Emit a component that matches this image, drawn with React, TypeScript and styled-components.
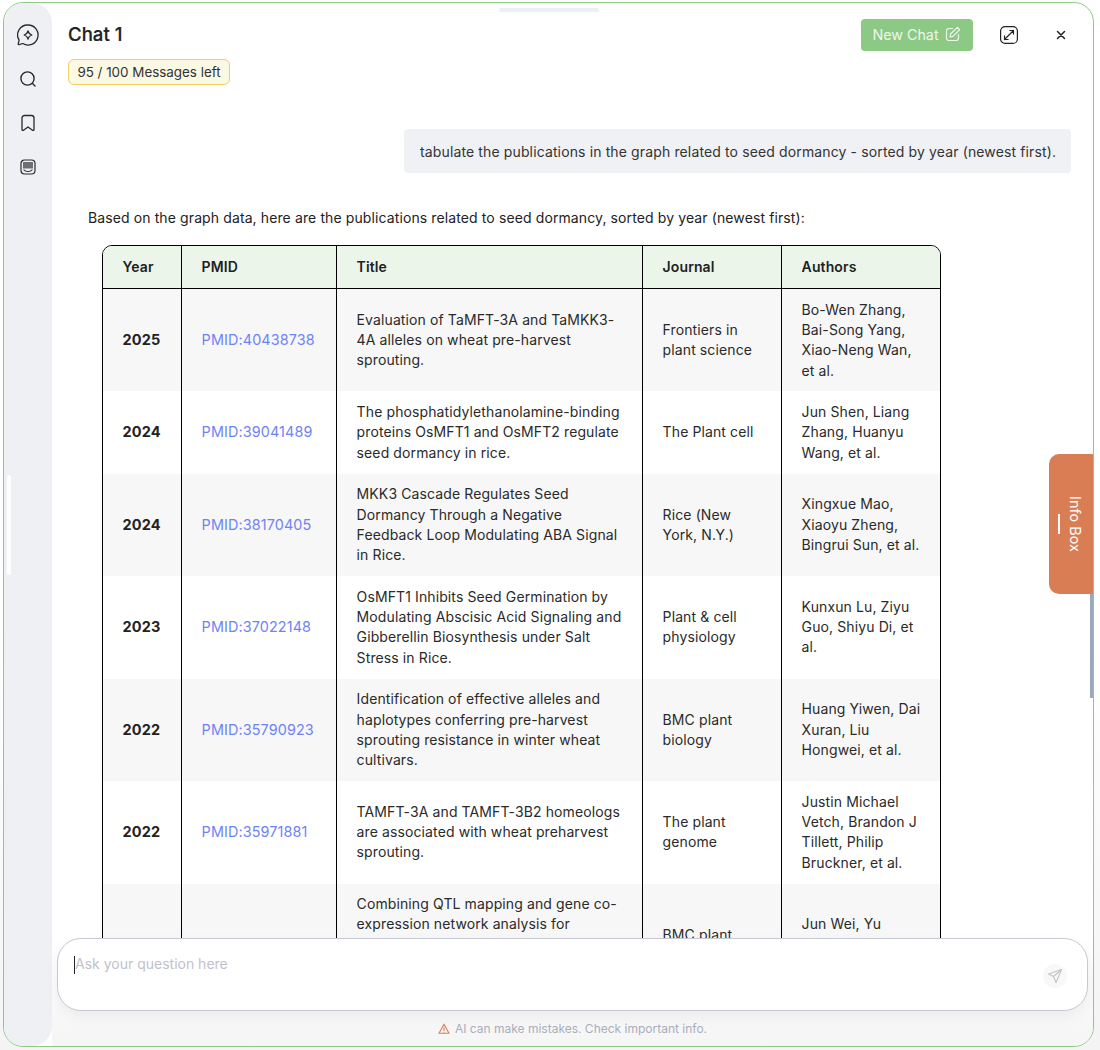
import React from "react";
import styled, { createGlobalStyle } from "styled-components";

const Global = createGlobalStyle`
  html, body { margin: 0; padding: 0; background: #fafafa; }
  body { font-family: Inter, "Liberation Sans", sans-serif; color: #222; }
  #root { height: 1050px; overflow: hidden; }
`;
const Page = styled.div`
  padding: 2px 6px 3px 3px;
  height: 1050px;
  box-sizing: border-box;
  background: linear-gradient(to bottom, #fff 0, #fff 60%, #f4f4f4 100%);
`;
const Card = styled.div`
  position: relative;
  height: 100%;
  box-sizing: border-box;
  border: 1px solid #8ccb84;
  border-radius: 20px;
  background: #fff;
  display: flex;
  overflow: hidden;
`;
const Sidebar = styled.nav`
  width: 48px;
  flex: none;
  background: #eef0f4;
  border-radius: 0 20px 20px 0;
  display: flex;
  flex-direction: column;
  align-items: center;
  padding-top: 21px;
  gap: 22px;
  box-sizing: border-box;
`;
const SideIcon = styled.span`
  display: flex;
  height: 22px;
  align-items: center;
  justify-content: center;
  color: #2a2a2a;
`;
const DrawerGrip = styled.div`
  position: absolute;
  left: 3px;
  top: 472px;
  width: 4px;
  height: 100px;
  border-radius: 2px;
  background: #fff;
`;
const TopGrip = styled.div`
  position: absolute;
  left: 495px;
  top: 5px;
  width: 100px;
  height: 4px;
  border-radius: 2px;
  background: #eeeff3;
`;
const Main = styled.main`
  flex: 1;
  min-width: 0;
  display: flex;
  flex-direction: column;
`;
const Header = styled.header`
  flex: none;
  height: 85px;
  box-sizing: border-box;
  padding: 18px 22px 0 16px;
  display: flex;
  justify-content: space-between;
  align-items: flex-start;
`;
const TitleBlock = styled.div`
  display: flex;
  flex-direction: column;
  align-items: flex-start;
  gap: 12px;
`;
const ChatTitle = styled.h1`
  margin: 0;
  font-size: 18.6px;
  line-height: 26px;
  font-weight: 500;
  color: #222;
  -webkit-text-stroke: 0.2px #222;
`;
const Quota = styled.span`
  height: 26px;
  box-sizing: border-box;
  width: 162px;
  display: flex;
  align-items: center;
  justify-content: center;
  border: 1px solid #efd060;
  border-radius: 6px;
  background: #fbf8e3;
  font-size: 13.4px;
  color: #333;
  white-space: nowrap;
`;
const Actions = styled.div`
  display: flex;
  align-items: center;
  margin-top: -2px;
`;
const NewChat = styled.button`
  width: 112px;
  height: 32px;
  border: 0;
  border-radius: 4px;
  background: #8cc984;
  color: #eef7ec;
  font: 400 14.3px Inter, sans-serif;
  display: flex;
  align-items: center;
  justify-content: center;
  gap: 6px;
  padding: 0 1px 2px 0;
`;
const IconBtn = styled.span<{ $ml: number }>`
  display: flex;
  margin-left: ${(p) => p.$ml}px;
  color: #222;
`;
const Messages = styled.div`
  flex: 1;
  min-height: 0;
  overflow: hidden;
  padding: 41px 22px 0 36px;
  display: flex;
  flex-direction: column;
  align-items: flex-start;
`;
const UserBubble = styled.div`
  align-self: flex-end;
  height: 44px;
  box-sizing: border-box;
  width: 667px;
  padding-left: 16px;
  display: flex;
  align-items: center;
  border-radius: 4px;
  background: #f0f1f5;
  font-size: 14px;
  letter-spacing: 0.13px;
  color: #333;
  white-space: nowrap;
  flex: none;
`;
const Reply = styled.p`
  margin: 35px 0 0;
  font-size: 14px;
  letter-spacing: 0.11px;
  line-height: 20px;
  color: #222;
  white-space: nowrap;
  flex: none;
`;
const TableFrame = styled.table`
  margin: 17px 0 0 14px;
  width: 839px;
  table-layout: fixed;
  border-collapse: separate;
  border-spacing: 0;
  border: 1px solid #000;
  border-radius: 10px;
  flex: none;
  font-size: 14px;
  letter-spacing: 0.11px;
  line-height: 20.3px;
  color: #2a2a2a;
`;
const Th = styled.th`
  height: 43px;
  padding: 0 0 0 19.6px;
  box-sizing: border-box;
  background: #ebf5ea;
  text-align: left;
  font-weight: 600;
  font-size: 14px;
  color: #222;
  border-bottom: 1px solid #000;
  border-right: 1px solid #000;
  &:first-child { border-top-left-radius: 9px; }
  &:last-child { border-right: 0; border-top-right-radius: 9px; }
`;
const Row = styled.tr<{ $shade: boolean }>`
  background: ${(p) => (p.$shade ? "#f7f7f7" : "#fff")};
`;
const Td = styled.td`
  padding: 10.65px 0 10.65px 19.6px;
  border-right: 1px solid #000;
  white-space: nowrap;
  vertical-align: middle;
  &:last-child { border-right: 0; }
`;
const YearCell = styled(Td)`
  font-weight: 700;
  font-size: 14.5px;
  color: #222;
`;
const PmidLink = styled.a`
  color: #6f83f5;
  text-decoration: none;
  font-size: 14.4px;
`;
const Footer = styled.div`
  flex: none;
  background: linear-gradient(to bottom, #fff, #f5f5f5);
  display: flex;
  flex-direction: column;
  height: 108px;
`;
const InputBox = styled.div`
  height: 73px;
  box-sizing: border-box;
  margin: 0 5px;
  border: 1px solid #c6c9d3;
  border-radius: 24px;
  background: #fff;
  box-shadow: 0 6px 14px rgba(0, 0, 0, 0.05);
  padding: 17px 32px 0 16px;
  display: flex;
  justify-content: space-between;
`;
const Placeholder = styled.span`
  font-size: 14px;
  line-height: 16px;
  height: 18px;
  color: #bfc2cc;
  border-left: 1px solid #222;
`;
const Send = styled.span`
  width: 24px;
  height: 24px;
  margin-top: 8px;
  margin-right: -12px;
  border-radius: 50%;
  background: #f8f8f8;
  color: #c0c3cc;
  display: flex;
  align-items: center;
  justify-content: center;
`;
const Notice = styled.div`
  margin-top: 10px;
  display: flex;
  align-items: center;
  justify-content: center;
  gap: 5px;
  font-size: 12px;
  line-height: 16px;
  color: #a9adbd;
`;
const InfoTab = styled.div`
  position: absolute;
  right: 0;
  top: 451px;
  width: 44px;
  height: 140px;
  box-sizing: border-box;
  border-radius: 10px 0 0 10px;
  background: #d97d55;
  display: flex;
  align-items: center;
  justify-content: center;
  gap: 7px;
  color: #fff;
  font-size: 14.5px;
`;
const TabDash = styled.span`
  width: 2px;
  height: 20px;
  background: #fff;
`;
const TabLabel = styled.span`
  writing-mode: vertical-rl;
  white-space: nowrap;
`;
const ScrollThumb = styled.div`
  position: absolute;
  right: 0;
  top: 591px;
  width: 3px;
  height: 104px;
  background: #9aa8bf;
`;

type Pub = { y: string; p: string; t: string[]; j: string[]; a: string[] };
const pubs: Pub[] = [
  { y: "2025", p: "PMID:40438738", t: ["Evaluation of TaMFT-3A and TaMKK3-", "4A alleles on wheat pre-harvest", "sprouting."], j: ["Frontiers in", "plant science"], a: ["Bo-Wen Zhang,", "Bai-Song Yang,", "Xiao-Neng Wan,", "et al."] },
  { y: "2024", p: "PMID:39041489", t: ["The phosphatidylethanolamine-binding", "proteins OsMFT1 and OsMFT2 regulate", "seed dormancy in rice."], j: ["The Plant cell"], a: ["Jun Shen, Liang", "Zhang, Huanyu", "Wang, et al."] },
  { y: "2024", p: "PMID:38170405", t: ["MKK3 Cascade Regulates Seed", "Dormancy Through a Negative", "Feedback Loop Modulating ABA Signal", "in Rice."], j: ["Rice (New", "York, N.Y.)"], a: ["Xingxue Mao,", "Xiaoyu Zheng,", "Bingrui Sun, et al."] },
  { y: "2023", p: "PMID:37022148", t: ["OsMFT1 Inhibits Seed Germination by", "Modulating Abscisic Acid Signaling and", "Gibberellin Biosynthesis under Salt", "Stress in Rice."], j: ["Plant & cell", "physiology"], a: ["Kunxun Lu, Ziyu", "Guo, Shiyu Di, et", "al."] },
  { y: "2022", p: "PMID:35790923", t: ["Identification of effective alleles and", "haplotypes conferring pre-harvest", "sprouting resistance in winter wheat", "cultivars."], j: ["BMC plant", "biology"], a: ["Huang Yiwen, Dai", "Xuran, Liu", "Hongwei, et al."] },
  { y: "2022", p: "PMID:35971881", t: ["TAMFT-3A and TAMFT-3B2 homeologs", "are associated with wheat preharvest", "sprouting."], j: ["The plant", "genome"], a: ["Justin Michael", "Vetch, Brandon J", "Tillett, Philip", "Bruckner, et al."] },
  { y: "2022", p: "PMID:35501690", t: ["Combining QTL mapping and gene co-", "expression network analysis for", "candidate genes of seed dormancy", "in rice cultivars from", "different regions."], j: ["BMC plant", "biology"], a: ["Jun Wei, Yu", "Zhang, Xin", "Li, et al."] },
];

const Lines = ({ items }: { items: string[] }) => (
  <>
    {items.map((l, i) => (
      <React.Fragment key={i}>
        {i > 0 && <br />}
        {l}
      </React.Fragment>
    ))}
  </>
);

const stroke = { fill: "none", stroke: "currentColor", strokeWidth: 1.4, strokeLinecap: "round" as const, strokeLinejoin: "round" as const };

export default function App() {
  return (
    <Page>
      <Global />
      <Card>
        <Sidebar>
          <SideIcon>
            <svg width="22" height="22" viewBox="0 0 22 22" {...stroke} strokeWidth={1.3}>
              <path d="M11 1a10 10 0 1 1-5.2 18.5L2 20.6c-.6.1-.9-.3-.8-.8l.9-3.6A10 10 0 0 1 11 1z" />
              <path d="M11 7c.5 2.100 1.500 3.200 3.800 4-2.300.8-3.300 1.900-3.800 4-.5-2.100-1.500-3.200-3.800-4 2.300-.8 3.300-1.900 3.800-4z" />
            </svg>
          </SideIcon>
          <SideIcon>
            <svg width="18" height="18" viewBox="0 0 18 18" {...stroke}>
              <circle cx="8.500" cy="8.500" r="6.600" />
              <path d="M13.500 13.500l2.500 2.500" />
            </svg>
          </SideIcon>
          <SideIcon>
            <svg width="16" height="18" viewBox="0 0 16 18" {...stroke} strokeWidth={1.3}>
              <path d="M2 4a2.500 2.500 0 0 1 2.500-2.500h7A2.500 2.500 0 0 1 14 4v11.500c0 .9-.9 1.200-1.500.7L8 13l-4.500 3.200c-.6.500-1.500.2-1.500-.7z" />
            </svg>
          </SideIcon>
          <SideIcon>
            <svg width="16" height="16" viewBox="0 0 16 16" {...stroke} strokeWidth={1.2}>
              <rect x="1" y="1" width="14" height="14" rx="3.500" />
              <path d="M3 3h10v6.500H3z" fill="currentColor" stroke="none" opacity="0.65" />
              <path d="M4 11c1.500 2 6.500 2 8 0" />
            </svg>
          </SideIcon>
        </Sidebar>
        <Main>
          <Header>
            <TitleBlock>
              <ChatTitle>Chat 1</ChatTitle>
              <Quota>95 / 100 Messages left</Quota>
            </TitleBlock>
            <Actions>
              <NewChat>
                New Chat
                <svg width="16" height="16" viewBox="0 0 16 16" fill="none" stroke="currentColor" strokeWidth="1.200" strokeLinecap="round" strokeLinejoin="round">
                  <path d="M13.500 8.500v3.500a2.500 2.500 0 0 1-2.500 2.500H4A2.500 2.500 0 0 1 1.500 12V5A2.500 2.500 0 0 1 4 2.500h3.500" />
                  <path d="M12.300 1.300l2.400 2.400-6.700 6.700-3 .6.600-3z" />
                </svg>
              </NewChat>
              <IconBtn $ml={27}>
                <svg width="18" height="18" viewBox="0 0 18 18" fill="none" stroke="currentColor" strokeWidth="1.200" strokeLinecap="round" strokeLinejoin="round">
                  <rect x="0.600" y="0.600" width="16.800" height="16.800" rx="4.500" />
                  <path d="M4.500 13.500L13.500 4.500M13.500 4.500h-3.600M13.500 4.500v3.600M4.500 13.500h3.600M4.500 13.500v-3.600" />
                </svg>
              </IconBtn>
              <IconBtn $ml={33}>
                <svg width="20" height="18" viewBox="0 0 20 18" fill="none" stroke="currentColor" strokeWidth="1.500" strokeLinecap="round">
                  <path d="M6.500 5.500l7 7M13.500 5.500l-7 7" />
                </svg>
              </IconBtn>
            </Actions>
          </Header>
          <Messages>
            <UserBubble>tabulate the publications in the graph related to seed dormancy - sorted by year (newest first).</UserBubble>
            <Reply>Based on the graph data, here are the publications related to seed dormancy, sorted by year (newest first):</Reply>
            <TableFrame>
              <colgroup>
                <col style={{ width: 79 }} />
                <col style={{ width: 155 }} />
                <col style={{ width: 306 }} />
                <col style={{ width: 139 }} />
                <col />
              </colgroup>
              <thead>
                <tr>
                  <Th>Year</Th>
                  <Th>PMID</Th>
                  <Th>Title</Th>
                  <Th>Journal</Th>
                  <Th>Authors</Th>
                </tr>
              </thead>
              <tbody>
                {pubs.map((r, i) => (
                  <Row key={r.p} $shade={i % 2 === 0}>
                    <YearCell>{r.y}</YearCell>
                    <Td><PmidLink href="#">{r.p}</PmidLink></Td>
                    <Td><Lines items={r.t} /></Td>
                    <Td><Lines items={r.j} /></Td>
                    <Td><Lines items={r.a} /></Td>
                  </Row>
                ))}
              </tbody>
            </TableFrame>
          </Messages>
          <Footer>
            <InputBox>
              <Placeholder>Ask your question here</Placeholder>
              <Send>
                <svg width="16" height="16" viewBox="0 0 16 16" fill="none" stroke="currentColor" strokeWidth="1.100" strokeLinejoin="round">
                  <path d="M14.500 1.500L1.500 6l5 2.500 2.500 6z" />
                  <path d="M6.500 8.500L14.500 1.500" />
                </svg>
              </Send>
            </InputBox>
            <Notice>
              <svg width="12" height="12" viewBox="0 0 12 12" fill="none" stroke="#d97d55" strokeWidth="1.100" strokeLinejoin="round" strokeLinecap="round">
                <path d="M6 1.200L11 10.300H1z" />
                <path d="M6 4.800v2.700M6 9v.1" />
              </svg>
              AI can make mistakes. Check important info.
            </Notice>
          </Footer>
        </Main>
        <TopGrip />
        <DrawerGrip />
        <InfoTab>
          <TabDash />
          <TabLabel>Info Box</TabLabel>
        </InfoTab>
        <ScrollThumb />
      </Card>
    </Page>
  );
}
